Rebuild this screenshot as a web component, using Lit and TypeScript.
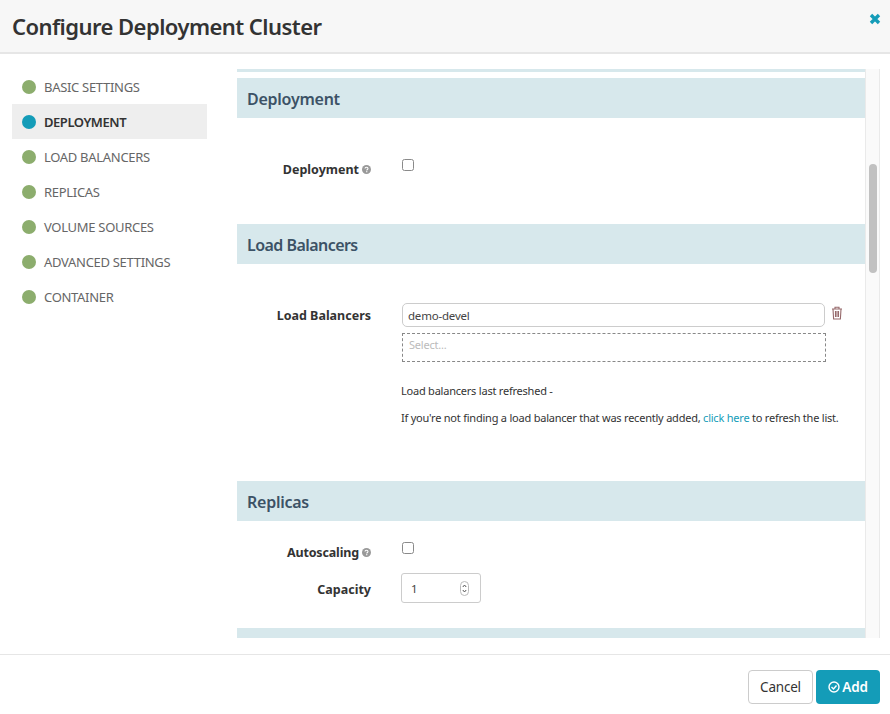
import { LitElement, html, css } from "lit";
import { customElement } from "lit/decorators.js";

const help = html`<svg class="help" viewBox="0 0 12 12" width="9" height="9"><circle cx="6" cy="6" r="6" fill="#999"/><path d="M4 4.6C4 3.5 4.9 3 6 3s2 .6 2 1.6c0 1.5-1.6 1.3-1.6 2.6" fill="none" stroke="#fff" stroke-width="1.4"/><rect x="5.5" y="8.2" width="1.6" height="1.5" fill="#fff"/></svg>`;

@customElement("app-root")
export class AppRoot extends LitElement {
  static styles = css`
    :host { display: flex; flex-direction: column; width: 890px; height: 714px; background: #fff; overflow: hidden;
      font-family: "Noto Sans", "Open Sans", sans-serif; color: #333; }
    * { box-sizing: border-box; }
    .top { height: 54px; flex: none; background: #f7f7f7; border-bottom: 2px solid #e6e6e6; display: flex; justify-content: space-between; padding: 0 9px 0 12px; }
    h1 { margin: 0; font-size: 22px; line-height: 52px; font-weight: 600; color: #333; letter-spacing: -0.55px; }
    .close { margin-top: 13px; }
    .main { flex: 1; min-height: 0; display: flex; padding-left: 12px; }
    .nav { width: 195px; flex: none; margin: 15px 30px 0 0; display: flex; flex-direction: column; }
    .nav div { height: 35px; display: flex; align-items: center; gap: 8px; padding: 1px 0 0 10px; font-size: 13px; letter-spacing: -0.3px; color: #666; }
    .nav div.on { background: #eee; color: #333; font-weight: 600; letter-spacing: -0.45px; }
    .nav i { width: 14px; height: 14px; border-radius: 50%; background: #8cad6d; margin-top: -1px; }
    .nav .on i { background: #149cb8; }
    .pane { flex: none; width: 628px; height: 569px; margin-top: 15px; overflow: hidden; }
    .strip { height: 3px; background: #d7e8ec; margin-bottom: 6px; }
    h2 { margin: 0; height: 40px; background: #d7e8ec; padding: 1px 0 0 10px; font-size: 16px; line-height: 40px; font-weight: 600; color: #3c5266; letter-spacing: -0.25px; }
    h2.tight { letter-spacing: -0.55px; }
    .row { display: flex; }
    .lab { width: 134px; flex: none; text-align: right; font-size: 12.5px; font-weight: 700; color: #333; display: flex; justify-content: flex-end; align-items: center; gap: 3px; }
    .help { flex: none; }
    .ctl { margin-left: 31px; }
    input[type="checkbox"] { appearance: none; display: block; margin: 0; width: 12px; height: 12px; border: 1px solid #8a8a8a; border-radius: 2.5px; background: #fff; }
    .deploy { padding: 41px 0 45px; }
    .deploy .lab { height: 20px; }
    .lb { padding: 39px 0 0; height: 217px; }
    .lb .lab { height: 24px; }
    .lb .ctl { width: 442px; margin-left: 31px; }
    .pick { display: flex; gap: 6px; align-items: flex-start; }
    .trash { margin-top: 3px; }
    .tag { width: 423px; height: 24px; border: 1px solid #ccc; border-radius: 5px; padding-left: 5px; font-size: 11.5px; line-height: 23px; color: #444; letter-spacing: -0.2px; }
    .sel { width: 424px; height: 29px; margin-top: 6px; border: 1px dashed #888; padding-left: 6px; font-size: 11px; line-height: 22px; color: #bbb; letter-spacing: -0.2px; }
    .note { font-size: 11px; line-height: 14px; color: #333; margin: 22px 0 0 -1px; letter-spacing: -0.22px; white-space: nowrap; }
    .note + .note { margin-top: 13px; }
    a { color: #149cb8; text-decoration: none; }
    .rep { padding: 21px 0 25px; }
    .rep .r1 .lab { height: 20px; letter-spacing: -0.15px; }
    .r2 { margin-top: 11px; }
    .r2 .lab { height: 30px; padding-top: 2px; }
    .r2 .ctl { margin-left: 30px; }
    .num { width: 80px; height: 30px; border: 1px solid #ccc; border-radius: 3px; display: flex; align-items: center; justify-content: space-between; padding: 0 11px 0 9px; font-size: 11.5px; color: #444; }
    .spin { display: block; }
    .track { width: 15px; height: 569px; margin-top: 15px; flex: none; background: #fafafa; border-left: 1px solid #eaeaea; border-right: 1px solid #eaeaea; padding: 95px 2px 0 3px; }
    .thumb { width: 8px; height: 109px; background: #c1c1c1; border-radius: 4px; }
    .bottom { flex: none; height: 60px; border-top: 1px solid #e6e6e6; display: flex; justify-content: flex-end; gap: 3px; padding: 15px 10px 0 0; }
    .btn { height: 34px; border-radius: 4px; font-size: 13.5px; display: flex; align-items: center; justify-content: center; letter-spacing: -0.2px; }
    .cancel { width: 65px; border: 1px solid #ccc; color: #333; }
    .add { width: 64px; background: #149cb8; color: #fff; font-weight: 600; gap: 2px; }
  `;
  render() {
    const steps = ["Basic Settings", "Deployment", "Load Balancers", "Replicas", "Volume Sources", "Advanced Settings", "Container"];
    return html`
      <div class="top">
        <h1>Configure Deployment Cluster</h1>
        <svg class="close" width="12" height="12" viewBox="0 0 12 12"><path d="M2 2l8 8M10 2l-8 8" stroke="#149cb8" stroke-width="3.4"/></svg>
      </div>
      <div class="main">
        <div class="nav">
          ${steps.map((s) => html`<div class=${s === "Deployment" ? "on" : ""}><i></i>${s.toUpperCase()}</div>`)}
        </div>
        <div class="pane">
          <div class="strip"></div>
          <h2>Deployment</h2>
          <div class="row deploy">
            <div class="lab">Deployment ${help}</div>
            <div class="ctl"><input type="checkbox" /></div>
          </div>
          <h2 class="tight">Load Balancers</h2>
          <div class="row lb">
            <div class="lab">Load Balancers</div>
            <div class="ctl">
              <div class="pick">
                <div class="tag">demo-devel</div>
                <svg class="trash" width="12" height="14" viewBox="0 0 12 14"><path d="M1 3h10M4 3V1.200h4V3M2 3l.6 10h6.800L10 3M4.500 5v6M6 5v6M7.500 5v6" fill="none" stroke="#96696b" stroke-width="1.1"/></svg>
              </div>
              <div class="sel">Select...</div>
              <p class="note">Load balancers last refreshed -</p>
              <p class="note">If you're not finding a load balancer that was recently added, <a>click here</a> to refresh the list.</p>
            </div>
          </div>
          <h2>Replicas</h2>
          <div class="rep">
            <div class="row r1">
              <div class="lab">Autoscaling ${help}</div>
              <div class="ctl"><input type="checkbox" /></div>
            </div>
            <div class="row r2">
              <div class="lab">Capacity</div>
              <div class="ctl">
                <div class="num">1
                  <svg class="spin" width="9" height="15" viewBox="0 0 9 15"><rect x=".5" y=".5" width="8" height="14" rx="4" fill="#fff" stroke="#bbb"/><path d="M2.800 6l1.700-2 1.700 2M2.800 9l1.700 2 1.700-2" fill="none" stroke="#555" stroke-width="1"/></svg>
                </div>
              </div>
            </div>
          </div>
          <h2></h2>
        </div>
        <div class="track"><div class="thumb"></div></div>
      </div>
      <div class="bottom">
        <div class="btn cancel">Cancel</div>
        <div class="btn add">
          <svg width="12" height="12" viewBox="0 0 12 12"><circle cx="6" cy="6" r="5" fill="none" stroke="#fff" stroke-width="1.4"/><path d="M3.500 6l2 2 3-3.500" fill="none" stroke="#fff" stroke-width="1.4"/></svg>
          Add
        </div>
      </div>
    `;
  }
}
